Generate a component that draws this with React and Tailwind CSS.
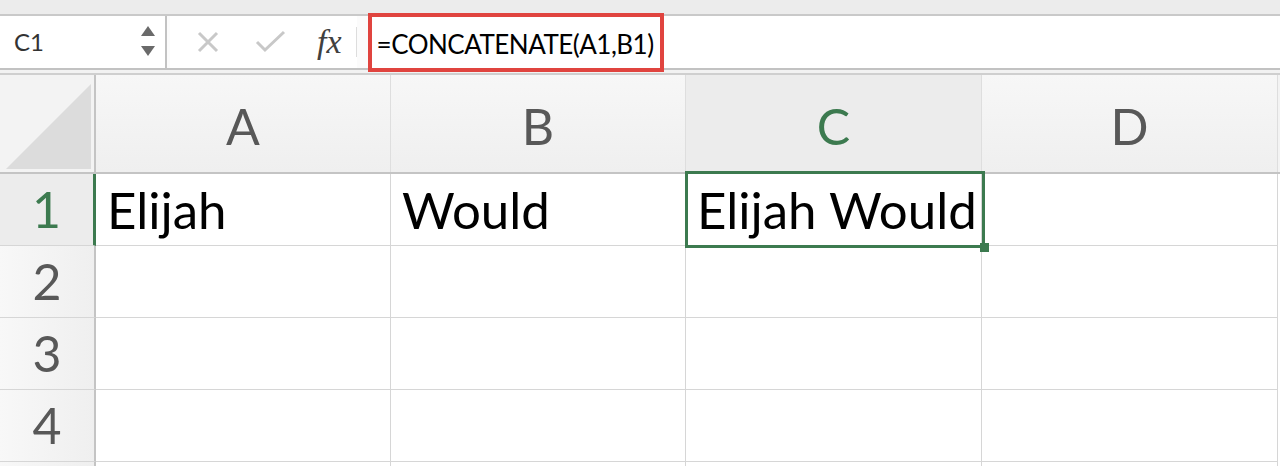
import React from "react";

const font = { fontFamily: "Lato, 'Open Sans', sans-serif" };

function Corner() {
  return (
    <div className="relative h-full w-full bg-[#f3f3f3] border-r-2 border-[#c4c4c4]">
      <svg width="96" height="99" className="absolute left-0 top-0">
        <polygon points="91,9 91,94 6,94" fill="#dcdcdc" />
      </svg>
    </div>
  );
}

function ColHeader({ label, selected }) {
  return (
    <div
      className={
        "flex items-center justify-center border-r border-[#dedede] text-[50px] leading-none " +
        (selected ? "bg-[#ececec] text-[#3c7a4f]" : "bg-gradient-to-b from-[#f7f7f7] to-[#efefef] text-[#585858]")
      }
    >
      <span className="mt-[4px]">{label}</span>
    </div>
  );
}

function RowHeader({ label, selected }) {
  return (
    <div
      className={
        "flex items-center justify-center border-b border-[#d6d6d6] text-[50px] leading-none " +
        (selected
          ? "bg-[#ececec] text-[#3c7a4f] border-r-[3px] border-r-[#3c7a4f]"
          : "bg-gradient-to-r from-[#f8f8f8] to-[#efefef] text-[#585858] border-r-2 border-r-[#c4c4c4]")
      }
    >
      <span className="-mt-[2px]">{label}</span>
    </div>
  );
}

function Cell({ children }) {
  return (
    <div className="flex items-center border-b border-r border-[#d6d6d6] pl-[11px] text-[51px] leading-none text-black">
      {children}
    </div>
  );
}

export default function App() {
  const rows = [
    ["1", "Elijah", "Would", "Elijah Would", ""],
    ["2", "", "", "", ""],
    ["3", "", "", "", ""],
    ["4", "", "", "", ""],
    ["", "", "", "", ""],
  ];
  return (
    <div className="h-[466px] w-[1280px] overflow-hidden bg-white" style={font}>
      {/* top strip */}
      <div className="h-[16px] bg-[#ececec] border-b-2 border-[#c9c9c9]" />
      {/* formula bar */}
      <div className="flex h-[54px] items-stretch bg-[#fbfbfb] border-b-2 border-[#c2c2c2]">
        <div className="flex w-[167px] items-center justify-between border-r-2 border-[#c2c2c2] bg-white pl-[14px] pr-[9px]">
          <span className="text-[24px] text-[#333333]">C1</span>
          <svg width="16" height="34" viewBox="0 0 16 34">
            <polygon points="8,1 15,11 1,11" fill="#6a6a6a" />
            <polygon points="1,21 15,21 8,31" fill="#6a6a6a" />
          </svg>
        </div>
        <div className="ml-[3px] flex items-center bg-white">
          <svg width="58" height="24" viewBox="0 0 58 24" className="ml-[27px]">
            <path d="M2 3 L20 21 M20 3 L2 21" stroke="#c8c8c8" strokeWidth="3" />
          </svg>
          <svg width="32" height="24" viewBox="0 0 32 24">
            <path d="M2 12 L10 20 L29 2" stroke="#c8c8c8" strokeWidth="3" fill="none" />
          </svg>
          <span
            className="ml-[30px] text-[34px] leading-none italic text-[#404040]"
            style={{ fontFamily: "'Liberation Serif', 'DejaVu Serif', serif" }}
          >
            fx
          </span>
          <div className="ml-[14px] h-[30px] w-px bg-[#dddddd]" />
        </div>
        <div className="-mt-[3px] -mb-[4px] ml-[11px] flex w-[296px] items-center border-[4px] border-[#e0443f] bg-white pl-[5px]">
          <span className="mt-[2px] text-[26px] leading-none tracking-[-0.5px] text-black">=CONCATENATE(A1,B1)</span>
        </div>
        <div className="flex-1 bg-white" />
      </div>
      <div className="h-[5px] bg-[#f2f2f2] border-b-2 border-[#cfcfcf]" />
      {/* grid */}
      <div className="grid grid-cols-[96px_295px_295px_296px_296px_2px] grid-rows-[99px_72px_72px_72px_72px_72px]">
        <div className="border-b-2 border-[#c4c4c4]">
          <Corner />
        </div>
        {["A", "B", "C", "D"].map((l) => (
          <div key={l} className="grid border-b-2 border-[#c4c4c4]">
            <ColHeader label={l} selected={l === "C"} />
          </div>
        ))}
        <div className="bg-[#f3f3f3] border-b-2 border-[#c4c4c4]" />
        {rows.map((r, i) => (
          <React.Fragment key={i}>
            <RowHeader label={r[0]} selected={r[0] === "1"} />
            <Cell>{r[1]}</Cell>
            <Cell>{r[2]}</Cell>
            <div className="relative grid">
              <Cell>{r[3]}</Cell>
              {i === 0 && (
                <div className="pointer-events-none absolute z-10 -left-[1px] -top-[3px] -right-[3px] bottom-[-2px] border-[3px] border-[#3c7a4f]">
                  <div className="absolute -bottom-[7px] -right-[7px] h-[9px] w-[9px] bg-[#3c7a4f]" />
                </div>
              )}
            </div>
            <Cell>{r[4]}</Cell>
            <div className="bg-white" />
          </React.Fragment>
        ))}
      </div>
    </div>
  );
}
